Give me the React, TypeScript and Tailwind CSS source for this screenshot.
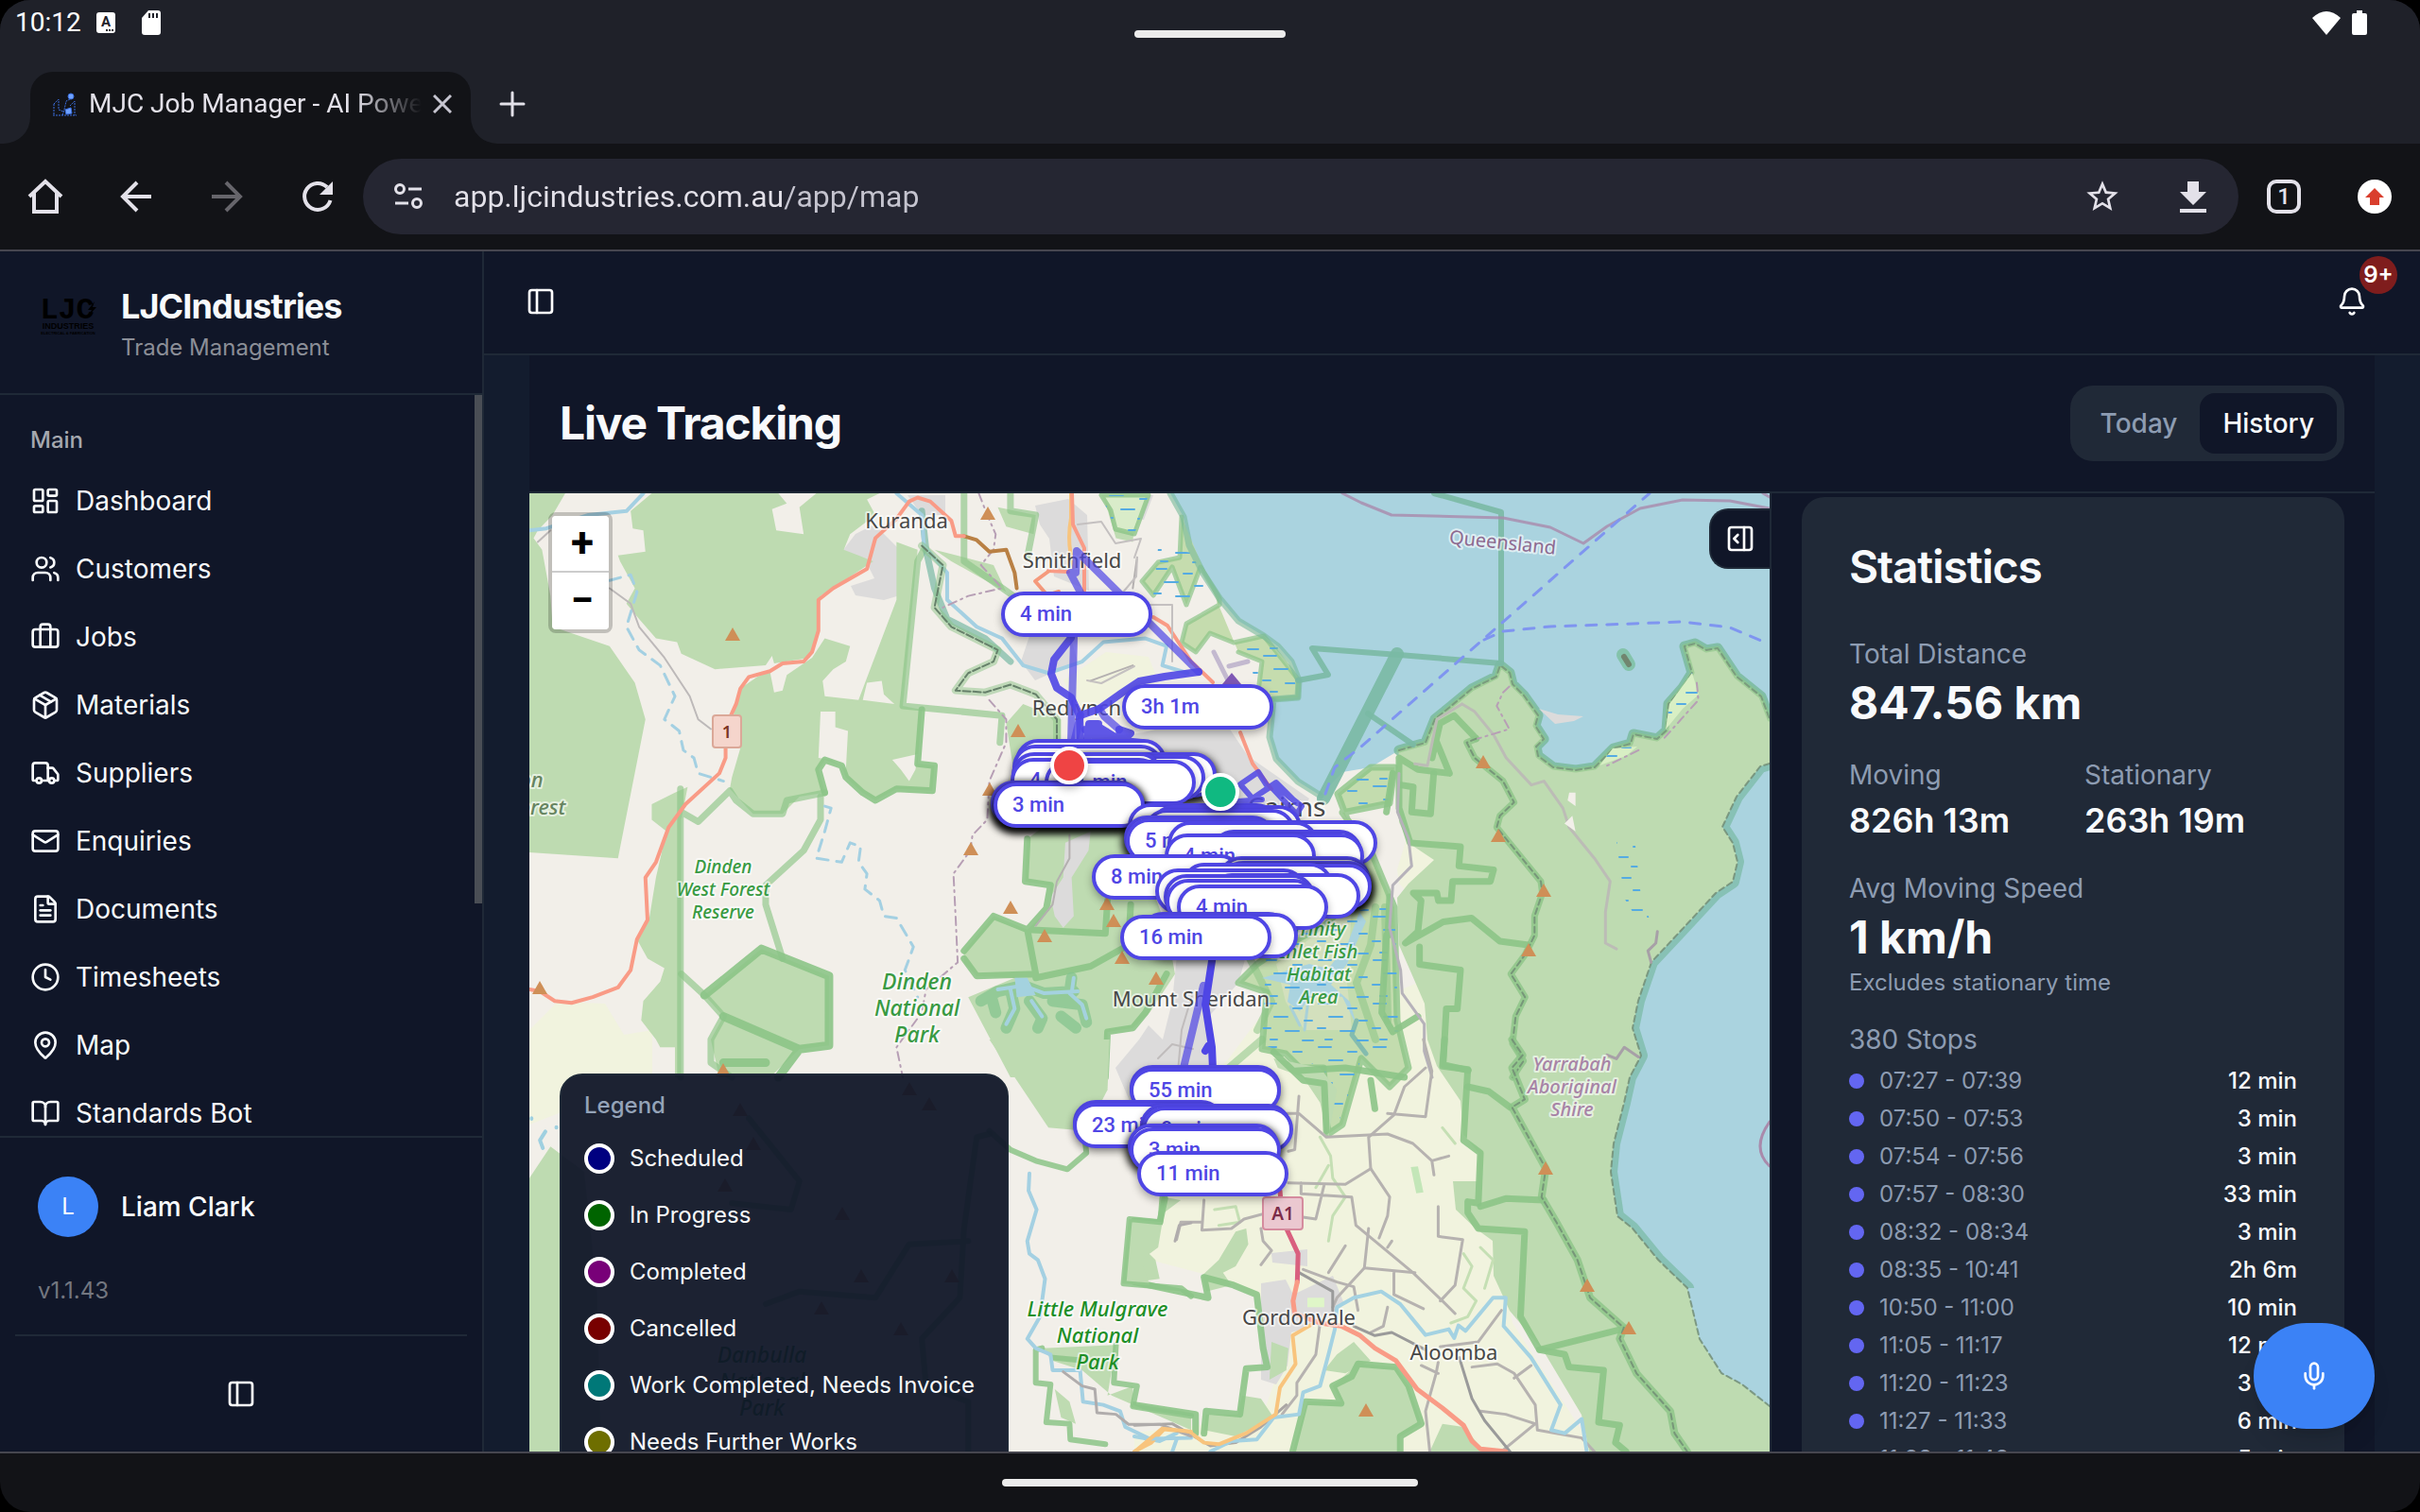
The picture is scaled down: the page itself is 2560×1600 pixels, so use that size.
import React, { useState } from "react";
import {
	Bell,
	BookOpen,
	Briefcase,
	Clock,
	FileText,
	LayoutDashboard,
	Mail,
	MapPin,
	Mic,
	Package,
	PanelLeft,
	PanelRightOpen,
	Truck,
	Users,
} from "lucide-react";

const navItems = [
	{ label: "Dashboard", icon: LayoutDashboard },
	{ label: "Customers", icon: Users },
	{ label: "Jobs", icon: Briefcase },
	{ label: "Materials", icon: Package },
	{ label: "Suppliers", icon: Truck },
	{ label: "Enquiries", icon: Mail },
	{ label: "Documents", icon: FileText },
	{ label: "Timesheets", icon: Clock },
	{ label: "Map", icon: MapPin },
	{ label: "Standards Bot", icon: BookOpen },
];

const legend = [
	{ label: "Scheduled", color: "bg-[#000080]" },
	{ label: "In Progress", color: "bg-[#006400]" },
	{ label: "Completed", color: "bg-[#780078]" },
	{ label: "Cancelled", color: "bg-[#780000]" },
	{ label: "Work Completed, Needs Invoice", color: "bg-[#007878]" },
	{ label: "Needs Further Works", color: "bg-[#6e6e00]" },
];

const stops = [
	["07:27 - 07:39", "12 min"],
	["07:50 - 07:53", "3 min"],
	["07:54 - 07:56", "3 min"],
	["07:57 - 08:30", "33 min"],
	["08:32 - 08:34", "3 min"],
	["08:35 - 10:41", "2h 6m"],
	["10:50 - 11:00", "10 min"],
	["11:05 - 11:17", "12 min"],
	["11:20 - 11:23", "3 min"],
	["11:27 - 11:33", "6 min"],
	["11:38 - 11:43", "5 min"],
];

// stop bubbles: x, y on the map canvas, label, heavy = many bubbles on one spot
const bubbles: [number, number, string, boolean?][] = [
	[499, 104, "4 min"],
	[627, 202, "3h 1m"],
	[514, 260, ""],
	[511, 266, ""],
	[567, 274, "", true],
	[555, 277, ""],
	[510, 274, ""],
	[509, 280, "4 min"],
	[545, 282, "11 min"],
	[488, 304, "", true],
	[491, 306, "3 min", true],
	[633, 328, ""],
	[657, 330, ""],
	[650, 334, ""],
	[629, 341, "", true],
	[737, 346, ""],
	[631, 344, "5 min"],
	[675, 347, ""],
	[721, 356, ""],
	[723, 360, ""],
	[672, 360, "4 min"],
	[595, 382, "8 min"],
	[729, 384, ""],
	[731, 389, "", true],
	[731, 392, "", true],
	[690, 391, ""],
	[662, 397, ""],
	[719, 402, ""],
	[671, 403, ""],
	[673, 408, ""],
	[685, 414, "4 min"],
	[646, 443, ""],
	[653, 444, ""],
	[625, 446, "16 min"],
	[635, 605, ""],
	[635, 608, "55 min"],
	[575, 642, ""],
	[575, 645, "23 min"],
	[646, 646, ""],
	[648, 649, "9 min"],
	[633, 667, "", true],
	[635, 671, "3 min"],
	[643, 696, "11 min"],
];

// mountain peaks on the 2x canvas
const peaks = [
	[775, 671], [1045, 543], [1077, 773], [1047, 835], [1027, 898], [1069, 960], [1105, 990],
	[1171, 956], [1178, 974], [1187, 1013], [1223, 1035], [765, 1132], [571, 1045],
	[1569, 806], [1585, 884], [1633, 942], [1617, 1005], [1635, 1236], [1679, 1360], [1723, 1405],
	[1445, 1492], [962, 1152], [983, 1168], [783, 1174], [797, 1210], [767, 1254], [891, 1284],
	[911, 1350], [1007, 1350], [869, 1384], [953, 1406],
];

const coast =
	"M1480,794 L1508,786 L1518,761 L1534,748 L1557,729 L1583,716 L1587,704 L1597,712 L1600,724 L1612,736 L1627,757 L1624,768 L1633,782 L1625,790 L1627,800 L1643,812 L1667,815 L1687,812 L1707,792 L1725,787 L1728,777 L1753,782 L1763,773 L1765,745 L1780,728 L1790,712 L1782,684 L1793,681 L1805,688 L1817,686 L1837,716 L1863,737 L1872,761";
const eastCoast =
	"M1872,808 L1862,811 L1837,843 L1822,875 L1833,892 L1838,912 L1833,933 L1815,945 L1777,986 L1747,1018 L1733,1059 L1727,1088 L1736,1117 L1724,1140 L1718,1167 L1707,1210 L1704,1240 L1711,1287 L1727,1300 L1754,1333 L1785,1363 L1798,1417 L1821,1453 L1843,1465 L1872,1488";
const westCoast =
	"M1238,522 L1252,547 L1258,577 L1273,607 L1290,633 L1310,657 L1337,673 L1352,684 L1366,700 L1374,720 L1373,738 L1347,740 L1343,780 L1350,803 L1373,827 L1397,842";

type LabelProps = {
	x: number;
	y: number;
	lines: string[];
	size?: number;
	color?: string;
	gap?: number;
	italic?: boolean;
};

function PlaceName({ x, y, lines, size = 22, color = "#474747", gap = 28, italic }: LabelProps) {
	return (
		<g
			fontFamily="'Noto Sans', sans-serif"
			fontSize={size}
			fontStyle={italic ? "italic" : "normal"}
			fontWeight={italic ? 500 : 400}
			textAnchor="middle"
			fill={color}
			stroke="#ffffff"
			strokeOpacity="0.6"
			strokeWidth="4"
			strokeLinejoin="round"
			paintOrder="stroke"
		>
			{lines.map((line, i) => (
				<text key={line} x={x} y={y + i * gap}>{line}</text>
			))}
		</g>
	);
}

function MapTiles() {
	const park = "#8cc487";
	return (
		<svg
			className="absolute inset-0 h-full w-full [&_path]:[vector-effect:non-scaling-stroke]"
			viewBox="560 522 1312 1014"
			preserveAspectRatio="xMinYMin slice"
			fill="none"
			strokeLinejoin="round"
			strokeLinecap="round"
			aria-label="Map"
		>
			<defs>
				<pattern id="marsh" width="58" height="46" patternUnits="userSpaceOnUse">
					<path d="M3,4 h13 M34,9 h9 M14,18 h14 M46,22 h8 M2,30 h8 M26,33 h14 M10,42 h7 M44,43 h11" stroke="#55abe2" strokeWidth="2" />
				</pattern>
			</defs>
			<rect x="560" y="522" width="1312" height="1014" fill="#f2efe9" />

			{/* farmland */}
			<path
				fill="#f1f3de"
				d="M1225,1200 L1300,1120 L1345,1060 L1400,1080 L1500,1040 L1490,900 L1520,905 L1560,1190 L1600,1400 L1690,1540 L1200,1540 L1200,1516 L1335,1500 L1370,1400 L1300,1355 L1204,1330 L1226,1296 Z"
			/>
			<path fill="#f1f3de" d="M560,1090 L590,1060 L640,1062 L660,1095 L690,1090 L690,1140 L560,1190 Z" />
			<path fill="#f1f3de" d="M1125,720 L1170,690 L1215,695 L1225,720 L1180,745 L1140,750 Z" />
			<path fill="#f1f3de" d="M1478,920 L1490,880 L1517,910 L1490,945 L1480,935 Z" />

			{/* towns */}
			<g fill="#dcdbdb">
				<path d="M905,565 L925,555 L960,590 L952,630 L935,635 L905,630 L900,620 L925,612 L915,592 L892,582 Z" />
				<path d="M960,524 L1000,524 L1000,545 L975,545 Z" />
				<path d="M1095,535 L1130,528 L1150,545 L1152,625 L1115,610 L1110,570 L1100,555 Z" />
				<path d="M1185,524 L1220,524 L1210,550 L1185,545 Z" />
				<path d="M1090,670 L1130,665 L1140,700 L1095,720 L1080,700 Z" />
				<path d="M1210,775 L1290,755 L1320,800 L1385,845 L1370,870 L1200,860 L1130,830 L1130,785 Z" />
				<path d="M1245,1010 L1320,1005 L1310,1040 L1275,1080 L1280,1130 L1195,1165 L1180,1130 L1205,1100 L1215,1085 L1230,1100 L1240,1060 Z" />
				<path d="M1334,1358 L1360,1354 L1368,1370 L1410,1350 L1422,1380 L1400,1400 L1366,1410 L1362,1445 L1350,1465 L1334,1460 Z" />
				<path d="M1345,1326 L1383,1322 L1383,1340 L1346,1336 Z" />
			</g>

			{/* sea */}
			<path fill="#aad3df" d={`${westCoast} L1420,817 L1450,812 L${coast.slice(1)} L1872,522 Z`} />
			<path fill="#aad3df" d={`${eastCoast} Z`} />

			{/* forest around the peninsula */}
			<path d={coast} stroke="#77b999" strokeWidth="11" strokeOpacity="0.8" />
			<path d={eastCoast} stroke="#77b9a3" strokeWidth="14" strokeOpacity="0.7" />
			<path
				fill="#bedbb1"
				d={`${coast} L${eastCoast.slice(1)} L1872,1540 L1682,1540 L1673,1497 L1633,1430 L1597,1387 L1580,1350 L1579,1313 L1561,1300 L1540,1280 L1537,1250 L1563,1250 L1564,1220 L1548,1200 L1545,1165 L1520,1128 L1510,1100 L1507,1062 L1480,1000 L1478,950 L1490,935 L1517,910 L1490,892 L1480,870 L1478,810 Z`}
			/>
			<path fill="#aad3df" d="M1872,1488 L1843,1465 L1821,1453 L1798,1417 L1785,1363 L1872,1363 Z" />
			<path d={coast} stroke="#8cc487" strokeWidth="5" strokeOpacity="0.6" />
			<path d={coast} stroke="#6f8a73" strokeWidth="2" strokeOpacity="0.7" strokeDasharray="6 4" />
			<path d={eastCoast} stroke="#6f8a73" strokeWidth="2" strokeOpacity="0.8" strokeDasharray="6 4" />
			<path d="M1717,693 l6,10" stroke="#7abf9d" strokeWidth="14" strokeOpacity="0.8" />
			<path d="M1718,695 l5,8" stroke="#71866f" strokeWidth="6" />
			<path fill="#d8efc4" d="M1790,712 L1797,735 L1780,750 L1762,772 L1766,745 Z M1706,792 L1732,790 L1720,800 L1692,810 Z" />
			<path fill="url(#marsh)" d="M1790,712 L1797,735 L1780,750 L1762,772 L1766,745 Z M1706,792 L1732,790 L1720,800 L1692,810 Z" />
			<path fill="url(#marsh)" d="M1710,890 L1730,895 L1736,950 L1750,985 L1735,978 L1718,950 Z" />
			<path fill="#dcdbdb" d="M1628,750 L1648,756 L1675,758 L1665,763 L1645,766 Z" />

			{/* western forests */}
			<g transform="translate(560 500) scale(0.4464 0.4082)">
				<g fill="#bedbb1">
					<path d="M0,54 L85,54 L55,110 L20,150 L10,170 L30,200 L50,320 L55,400 L190,450 L250,545 L275,640 L210,1000 L0,985 Z" />
					<path d="M290,54 L590,54 L610,80 L575,95 L585,150 L650,160 L640,90 L680,54 L830,54 L800,70 L820,110 L760,160 L745,200 L780,215 L815,230 L760,270 L690,320 L682,420 L665,480 L580,495 L575,475 L560,500 L440,510 L360,470 L350,440 L300,430 L260,380 L230,340 L250,300 L215,230 L210,215 L275,205 L270,150 L245,145 L240,100 Z" />
					<path d="M870,180 L920,200 L885,605 L930,615 L920,755 L960,760 L955,825 L870,820 L820,850 L790,830 L750,790 L740,760 L700,745 L685,770 L700,830 L640,840 L600,885 L530,885 L475,820 L480,790 L500,715 L470,690 L490,600 L500,560 L540,530 L570,515 L580,570 L600,565 L610,525 L670,480 L700,430 L760,450 L750,490 L720,510 L695,540 L700,580 L780,590 L870,330 Z" />
					<path d="M375,815 L345,830 L290,860 L290,900 L325,930 L300,1050 L285,1150 L255,1210 L280,1260 L320,1285 L310,1320 L270,1370 L265,1420 L300,1470 L310,1490 L345,1490 L345,1568 L360,1568 L360,900 Z" />
					<path d="M415,1355 L550,1235 L710,1305 L710,1485 L640,1495 L570,1568 L450,1568 L430,1470 L460,1410 Z" />
					<path d="M1030,1240 L1100,1150 L1180,1185 L1235,1130 L1235,1070 L1175,1060 L1180,950 L1240,900 L1400,900 L1450,1000 L1510,1180 L1530,1300 L1470,1400 L1430,1440 L1370,1450 L1370,1568 L1140,1568 L1040,1360 L1150,1310 L1060,1305 L1030,1270 Z" />
					<path d="M1110,90 L1200,110 L1195,160 L1130,140 Z M1170,600 L1260,640 L1260,700 L1150,790 L1130,650 Z M1360,60 L1440,60 L1430,180 L1390,170 Z" />
					<path d="M960,200 L1100,240 L1130,310 L1000,230 Z" />
				</g>
				{/* suburb strip in the valley */}
				<path d="M1270,960 L1330,930 L1325,980 L1285,1050 L1290,1150 L1265,1180 L1245,1150 L1235,1100 L1265,1050 Z" fill="#dcdbdb" />
				<g fill="#f2efe9">
					<path d="M690,620 L725,620 L725,660 L755,670 L750,770 L715,745 L685,740 Z" />
					<path d="M860,745 L920,730 L915,770 L900,800 L880,770 Z" />
					<path d="M800,545 L835,540 L840,575 L865,600 L790,590 Z" />
				</g>
				{/* park borders */}
				<g stroke={park} strokeWidth="7" strokeOpacity="0.65">
					<path d="M935,200 L920,230 L885,605 L1120,630 L1115,700" />
					<path d="M930,615 L920,755 L960,760 L955,825 L870,820 L820,850 L790,830 L750,790 L740,760 L700,745 L685,770 L700,830" strokeOpacity="0.9" />
					<path d="M1030,54 L1030,230 L1160,330 M1140,54 L1140,100 L1200,110 L1180,220" />
					<path d="M358,820 L358,1568 M360,880 L400,905 L475,825 L490,850 L530,885 L600,885 L610,850 L700,830" />
					<path d="M690,840 L690,900 L650,980 L560,1070 L560,1120 L600,1260" />
					<path d="M360,1300 L415,1355 L460,1410 L430,1470 L430,1530 L480,1568" />
					<path d="M415,1355 L550,1235 L710,1305 L710,1485 L640,1495 L460,1410 M640,1495 L590,1568 M460,1530 L560,1530" strokeWidth="9" strokeOpacity="0.9" />
					<path d="M1030,1240 L1100,1150 L1180,1185 L1365,1195 L1370,1110 M1180,1185 L1200,1300 L1060,1305 L1030,1260 M1180,950 L1175,1060 L1235,1070 L1225,1130 L1180,1185 M1200,1310 L1330,1280 L1420,1225 L1425,1120" strokeOpacity="0.9" />
					<path d="M1510,1300 L1460,1400 L1430,1440 L1370,1450 L1365,1568" strokeOpacity="0.9" />
					<path d="M930,100 L940,200 L960,300 L990,380 L1080,430 L1140,490" stroke="#6fb3a0" />
				</g>
				{/* reservoir */}
				<path
					d="M1070,1370 L1110,1345 L1170,1330 L1220,1350 L1290,1345 M1140,1340 L1150,1390 L1130,1440 M1185,1370 L1215,1415 L1205,1440 M1240,1370 L1310,1380 L1320,1425 M1095,1360 L1105,1400 M1280,1350 L1285,1310 M1260,1410 L1295,1440"
					stroke="#84c48f"
					strokeWidth="12"
					strokeOpacity="0.75"
				/>
				<path
					d="M1110,1340 L1170,1330 L1220,1350 L1300,1345 M1140,1340 L1150,1390 L1130,1430 M1190,1370 L1215,1410 M1280,1350 L1310,1380 L1320,1415 M1285,1350 L1290,1310"
					stroke="#a4d2df"
					strokeWidth="4"
				/>
				<path d="M1150,1310 L1180,1310 L1200,1355 L1155,1360 Z" fill="#a4d2df" />
				{/* creeks */}
				<g stroke="#a4d0e2" strokeWidth="4">
					<path d="M0,150 L40,145 L140,110 L230,100 L270,54" />
					<path d="M190,280 L240,265 L255,310 L230,400 L260,460 L310,500 L345,580 L320,640 L355,670 L365,720 L390,740 L400,780 L460,800" strokeWidth="3" strokeDasharray="12 9" />
					<path d="M700,865 L715,870 L700,930 L680,1000 L740,1010 L760,960 L785,970 L780,1010 L800,1040 L795,1080 L830,1110 L840,1150 L870,1155 L910,1230 L890,1290 L920,1360" strokeWidth="3" strokeDasharray="12 9" />
					<path d="M870,54 L930,110 L935,190 L990,260 L990,330 L1060,400 L1120,430 L1170,500 L1230,520 L1310,490 L1360,440 L1460,430 L1510,450 L1500,500 L1560,520" />
				</g>
				{/* boundary lines */}
				<g stroke="#b79fb5" strokeWidth="2" strokeDasharray="9 5 2 5">
					<path d="M1065,54 L1085,110 L1105,160 L1100,200 L1070,240 L1120,300 L1040,320 L980,350" />
					<path d="M1090,590 L1130,640 L1130,700 L1090,800 L1085,900 L1050,940 L1045,980 L1005,1040 L1010,1150 L1015,1270 L940,1340 L930,1400 L870,1490 L885,1568" />
				</g>
				<path d="M930,190 L980,240 L960,350 L1000,400 L1110,460 L1100,490 L1040,520 L1010,565 L1080,570 L1140,550 L1200,575 L1250,640 L1250,700" stroke={park} strokeWidth="8" strokeOpacity="0.5" />
				<path d="M930,190 L980,240 L960,350 L1000,400 L1110,460 L1100,490 L1040,520 L1010,565 L1080,570 L1140,550 L1200,575 L1250,640 L1250,700" stroke="#66806a" strokeWidth="2" strokeDasharray="8 3" />
				<path d="M190,300 L240,340 L260,400 L320,480 L380,580 L400,640 L430,665 M20,180 L50,150" stroke="#bdb9b9" strokeWidth="2" />
				<path d="M1200,1175 L1240,1120 L1250,1060 L1280,1000 L1280,940 M1440,220 L1430,300 M1330,540 L1430,500" stroke="#b4b0b0" strokeWidth="2" />
				{/* highways */}
				<path d="M1030,165 L1060,175 L1090,205 L1130,200 L1150,260 L1155,300" stroke="#b98044" strokeWidth="4" />
				<path
					d="M0,1340 L25,1345 L60,1370 L100,1375 L150,1360 L210,1335 L240,1290 L255,1210 L280,1160 L275,1050 L300,1010 L330,920 L370,860 L450,780 L465,740 L465,660 L490,600 L500,560 L520,530 L570,515 L600,495 L650,490 L670,465 L685,410 L685,330 L720,300 L800,250 L820,170 L870,120 L900,75 L920,65 L950,75 L1000,125 L1010,165 L1030,165"
					stroke="#f99b86"
					strokeWidth="4"
				/>
			</g>

			{/* coast strip and inlet */}
			<path
				d="M1250,547 L1248,590 L1225,595 L1208,615 L1220,630 L1240,600 L1255,640 L1270,600 L1290,633 L1290,640 L1255,660 L1250,680 L1265,690 L1280,670 L1305,680 L1337,673 L1374,720 L1373,738 L1347,740 L1330,740 L1335,700 L1310,690"
				fill="#c5dcae"
				stroke={park}
				strokeWidth="5"
				strokeOpacity="0.7"
			/>
			<path d="M1165,524 L1215,524 L1200,565 L1180,560 L1175,540 Z" fill="#d9ecc9" stroke={park} strokeWidth="5" strokeOpacity="0.8" />
			<path d="M1165,524 L1215,524 L1200,565 L1180,560 Z M1225,580 L1262,585 L1280,640 L1220,630 Z M1310,680 L1360,685 L1374,738 L1330,740 L1325,710 Z" fill="url(#marsh)" />
			<path
				d="M1450,812 L1475,812 L1470,850 L1420,860 L1450,900 L1475,960 L1478,1080 L1490,1130 L1470,1150 L1440,1120 L1420,1190 L1405,1200 L1400,1130 L1375,1130 L1360,1115 L1335,1110 L1340,1050 L1310,1040 L1330,1020 L1360,1000 L1400,980 L1440,950 L1430,880 L1415,840 Z"
				fill="#c3dcae"
				stroke={park}
				strokeWidth="7"
				strokeOpacity="0.8"
			/>
			<path d="M1350,1020 L1430,960 L1425,1040 L1430,1090 L1380,1090 L1360,1060 Z" fill="#d3e0bd" />
			<path d="M1455,960 L1450,1000 L1435,1040 L1445,1070 L1455,1100 M1465,960 L1468,1080 M1335,1100 L1300,1130 L1285,1140 M1320,1010 L1345,1060 L1330,1090" stroke={park} strokeWidth="8" strokeOpacity="0.55" />
			<path d="M1438,965 L1425,1000 L1405,1025 L1385,1020 L1335,1035 L1365,1042 L1362,1060 L1375,1070 L1390,1050 L1420,1055 L1435,1085 L1428,1060 L1408,1042 L1425,1020 L1445,975 Z" fill="#aad3df" />
			<path d="M1435,1080 L1430,1095 L1445,1115" stroke="#84bcae" strokeWidth="5" />
			<path d="M1385,1050 L1380,1090 M1365,1065 L1375,1085" stroke="#a9d1d8" strokeWidth="3" />
			<path d="M1340,1000 L1475,950 L1480,1120 L1440,1120 L1415,1190 L1400,1130 L1335,1105 Z M1420,820 L1472,815 L1468,850 L1425,855 Z" fill="url(#marsh)" />
			<path d={westCoast} stroke="#77b999" strokeWidth="7" strokeOpacity="0.6" />
			<path d="M1284,690 L1300,722 M1300,705 L1320,700" stroke="#c3b9cf" strokeWidth="5" />
			<path d="M1293,724 L1303,712 L1313,724 Z" fill="#7e57b4" />

			{/* marine park limits */}
			<g stroke="#7ab9a4" strokeWidth="6" strokeOpacity="0.9">
				<path d="M1373,720 L1405,714 L1388,686 L1480,693 L1588,702 L1588,542 L1517,522" />
				<path d="M1447,755 L1495,788" />
				<path d="M1478,692 L1400,845" strokeWidth="14" />
			</g>
			<path d="M1420,522 L1440,532 L1472,545 L1590,548 L1640,558 L1675,575 L1700,557 L1735,538 L1780,529 L1830,530 L1872,538 M1865,522 L1872,526" stroke="#a98aab" strokeWidth="3" strokeOpacity="0.8" />
			<path d="M1872,1187 Q1852,1215 1872,1234" stroke="#a98aab" strokeWidth="3" />
			<g stroke="#7f95f0" strokeWidth="3" strokeDasharray="11 11">
				<path d="M1402,840 L1412,812 L1440,790 L1565,680 L1745,522" />
				<path d="M1570,677 L1590,668 L1640,663 L1700,661 L1780,658 L1830,664 L1868,680" />
			</g>

			{/* eastern ridge and tracks */}
			<g transform="translate(1400 500) scale(0.3333 0.4082)">
				<g stroke={park} strokeWidth="7" strokeOpacity="0.9">
					<path d="M345,740 L370,650 L415,630 L485,690 M355,690 L400,780 L300,770 L240,740 M240,740 L240,870 L275,960 L435,970 L430,1020 L540,1030 L530,1060 L410,1060 L405,1110 L365,1110 L360,1090 L285,1090 L310,1110 L300,1190 L260,1220 L380,1165 L470,1155 L560,1215 L650,1225" />
					<path d="M245,810 L285,815 L280,880 L340,885 L350,780 M305,1230 L305,1275 L435,1290 L425,1390 L390,1390 L380,1535 L460,1550" />
					<path d="M200,1200 L185,1400 L220,1450 L300,1410 M200,880 L220,780 M210,1100 L205,1200" />
				</g>
				<path d="M485,690 L455,700 L480,740 L570,800 L605,855 L560,890 L550,920 L600,970 L690,1060 L695,1090 L670,1150 L670,1200 L640,1250 L595,1300 L640,1360 L610,1410 L600,1480 L635,1525 L600,1568" stroke="#8cc487" strokeWidth="7" strokeOpacity="0.8" />
				<path d="M485,690 L455,700 L480,740 L570,800 L605,855 L560,890 L550,920 L600,970 L690,1060 L695,1090 L670,1150 L670,1200 L640,1250 L595,1300 L640,1360 L610,1410 L600,1480 L635,1525 L600,1568" stroke="#6f8a73" strokeWidth="2" strokeOpacity="0.8" strokeDasharray="6 4" />
				<path d="M440,600 L480,620 L540,680 L580,740 L660,810 L700,800 L760,870 L780,920 L860,1000 L910,1060 L895,1140 L895,1220 L930,1235 M440,600 L360,640 L330,760 L290,755" stroke="#bcbcb6" strokeWidth="3" />
				<path d="M240,780 L235,880 L270,950 L280,1020 L220,1070 L210,1180 L245,1290 L250,1350 L320,1430 L320,1500 L345,1568" stroke="#b6b2ba" strokeWidth="3" />
				<path d="M590,555 L570,570 L550,605 L590,665 L490,690 M1185,545 L1190,590 L1080,690 M1000,720 L900,760" stroke="#b79fb5" strokeWidth="2" strokeDasharray="9 5 2 5" />
				<path d="M900,1510 L930,1520 L955,1490 L1000,1515 M1060,1190 L1055,1220 L1030,1240 L1040,1270" stroke="#a7a0a7" strokeWidth="3" />
				<path d="M780,830 L800,830 L800,865 L775,850 Z M765,910 L790,890 L800,930 Z" fill="#f2efe9" />
			</g>

			{/* southern valley */}
			<g transform="translate(1200 1100) scale(0.4464 0.3333)">
				<path d="M0,770 L100,790 L170,810 L165,750 L240,790 L290,820 L305,960 L250,1040 L245,1190 L0,1160 Z" fill="#f2efe9" />
				<g fill="#bedbb1">
					<path d="M0,575 L60,580 L70,500 L110,510 L60,560 L20,660 L50,700 L60,760 L0,770 Z" />
					<path d="M265,600 L270,650 L240,720 L210,740 L230,780 L170,800 L160,750 L200,700 L240,610 Z" />
					<path d="M375,1308 L410,1150 L490,1150 L470,1100 L530,1030 L620,1040 L650,1100 L680,1220 L630,1260 L630,1308 Z M480,1000 L520,960 L560,1020 L500,1060 L450,1050 Z" />
					<path d="M170,1190 L245,1190 L255,1130 L300,1140 L330,1200 L240,1260 L165,1240 Z M325,960 L365,980 L360,1050 L320,1080 Z M730,1220 L780,1230 L830,1308 L700,1308 Z" />
					<path d="M330,60 L440,90 L480,160 L460,310 L440,200 L400,120 L340,90 Z" />
				</g>
				<g stroke={park} strokeWidth="7" strokeOpacity="0.9">
					<path d="M0,575 L60,582 L72,505" />
					<path d="M0,770 L175,820 L165,755 L235,780 L290,810 L305,980 L315,1040 L265,1045 L250,1190 L170,1180 L165,1250 M0,1160 L145,1190 L145,1250" />
					<path d="M735,0 L730,85 L790,95 L780,320 L820,360 L815,520 L790,515 L790,550 L815,600 L925,610 L915,880 L960,985 L1020,1000 L1030,1040 L1112,1050 L1100,1215 L1150,1225 L1140,1280 L1165,1308" />
					<path d="M790,150 L840,165 L890,215 M820,530 L880,505 L970,510 M960,985 L1170,915" />
					<path d="M375,1308 L405,1150 L490,1155 L470,1100 L515,1070 L530,1030 L620,1040 L650,1100 L680,1220 L630,1260 L630,1308" />
					<path d="M330,40 L400,130 L450,140 L455,290 M560,130 L570,220 M380,100 L500,90 L640,120" />
				</g>
				<g stroke="#c5dfb4" strokeWidth="3">
					<path d="M440,310 L465,370 L470,440 L500,500 L470,560 L460,640 M460,400 L430,470 M190,540 L240,530 L250,580 L200,590" />
					<path d="M780,680 L800,720 L780,790 L810,830 L790,880 L750,900 M820,660 L850,700 L830,790 M730,280 L760,330" />
				</g>
				<path d="M655,405 L672,403 L685,485 L668,488 Z" fill="#c3e6b8" />
				<path d="M410,820 h40 v30 h-40 Z" fill="#dff6c8" />
				{/* local roads */}
				<g stroke="#b6b2b0" strokeWidth="3">
					<path d="M360,235 L390,235 L455,310 L600,300 L660,330 L705,385 L745,370 M705,385 L710,430 M390,180 L380,350 L365,355" />
					<path d="M600,235 L690,245 L705,100 L685,0 M690,90 L640,150 L615,240 L555,310 L560,410 L605,500 L600,560 L580,630" />
					<path d="M365,455 L500,460 L560,410 M395,455 L395,490 L515,500 L525,590 L660,740 L730,830 L760,870 M450,460 L430,570 L380,560" />
					<path d="M720,530 L720,625 L778,635 L760,780 L725,830 M610,640 L600,660 M555,600 L545,725 L665,740 M615,740 L615,810 L685,855" />
					<path d="M545,725 L480,820 L470,850 M500,655 L460,740 M400,730 L480,770 L520,785 L530,860" />
					<path d="M165,510 L160,605 M160,580 L110,580 L100,635 M160,605 L230,600 L260,570 L330,545 M300,600 L305,640 L325,670 L300,715" />
					<path d="M440,900 L430,1000 L385,1090 L385,1130 L350,1190 M870,860 L815,960 L725,975 M600,850 L590,910 L560,930" />
					<path d="M720,1025 L715,1060 L690,1180 L700,1308 M680,1035 L720,1060 M800,1040 L860,1030 L900,1060 L950,1160 L955,1240 L1060,1265 L1090,1308 M940,1035 L900,1075 M820,1180 L880,1190 L950,1220 L870,1308" />
				</g>
				<path d="M390,740 L470,800 L470,860 M520,910 L570,940 L610,930 L690,985 M770,1010 L800,1140 L830,1210 L890,1308" stroke="#9a9a9a" strokeWidth="3" />
				<path d="M0,1225 L90,1220 L180,1290 L240,1280 L300,1230 L360,1160" stroke="#aaa6a4" strokeWidth="3" />
				{/* Mulgrave River */}
				<path
					d="M180,1308 L230,1275 L290,1270 L330,1200 L390,1190 L400,1120 L440,1100 L460,1000 L475,920 L480,850 L520,820 L585,800 L630,840 L690,938 L745,920 L758,948 L768,908 L785,925 L850,820 L880,820 L875,910 L940,1010 L1010,1160 L988,1240 L1020,1250 L1060,1205 L1072,1308"
					stroke="#a4d2e2"
					strokeWidth="4"
				/>
				<path d="M0,1260 L60,1275 L100,1250 M90,1308 L100,1270" stroke="#a4d2e2" strokeWidth="4" />
				<path d="M420,905 L375,940 L382,1030 L345,1105 L335,1190 L265,1250 L200,1285 L165,1280 L130,1245 L70,1238 L40,1280 L0,1308" stroke="#f8c47d" strokeWidth="4" />
				<path d="M345,480 L347,510 M362,605 L388,680 L386,770" stroke="#d9607f" strokeWidth="5" />
				<path d="M386,770 L376,830 L380,870 L440,900 L490,910 L535,940 L570,980 L620,1020 L670,1110 L730,1170 L780,1225 L800,1275 L820,1300 L880,1308" stroke="#f99b86" strokeWidth="5" />
				<path d="M895,0 L920,50 L895,90 L925,190 L895,215 L975,410 L965,500 L1000,580 L1050,700 L1080,820 L1160,915 L1150,950 L1190,1060 L1270,1180 L1280,1250 L1310,1308" stroke="#8cc487" strokeWidth="8" strokeOpacity="0.8" />
				<path d="M895,0 L920,50 L895,90 L925,190 L895,215 L975,410 L965,500 L1000,580 L1050,700 L1080,820 L1160,915 L1150,950 L1190,1060 L1270,1180 L1280,1250 L1310,1308" stroke="#6f8a73" strokeWidth="2" strokeOpacity="0.8" strokeDasharray="6 4" />
			</g>

			{/* south-west corner, partly under the legend */}
			<g transform="translate(560 1100) scale(0.4464 0.3333)">
				<path d="M0,440 L50,340 L130,420 L160,800 L170,1308 L0,1308 Z" fill="#bedbb1" />
				<path d="M1090,0 L1230,280 L1320,290 L1370,160 L1375,0 Z" fill="#bedbb1" />
				<path d="M1420,570 L1500,580 L1490,660 L1450,700 L1470,780 L1405,775 Z M1245,1110 L1280,1150 L1295,1220 L1260,1200 Z M1215,980 L1390,970 L1370,1130 L1430,1100 L1430,1170 L1568,1200 L1568,1240 L1380,1130 L1310,1050 L1240,1020 Z" fill="#bedbb1" />
				<g stroke={park} strokeWidth="6" strokeOpacity="0.85">
					<path d="M1090,290 L1140,350 L1200,385 L1275,412 L1320,360 L1315,300" />
					<path d="M1500,500 L1495,580 L1422,570 L1408,775 L1545,790 L1568,815 M1215,980 L1200,985 L1200,1090 L1235,1095 L1225,1215 L1280,1220 L1282,1270 L1365,1285 M1390,970 L1385,1090 L1440,1100 L1430,1165 L1568,1195 M1240,1010 L1320,1020" />
					<path d="M1090,300 L1060,310 L1030,600 L1020,820 L930,950 L940,1100 L1040,1150 L1040,1308 M520,250 L640,450 L620,540 L480,520 M560,840 L640,800 L820,820 L900,650 L1040,640" />
				</g>
				<path d="M1185,425 L1183,480 L1202,540 L1180,640 L1185,680 L1205,700 L1222,760 L1210,880 L1180,950 L1200,980 L1235,1000 L1240,1050 L1305,1050 L1312,1150 L1360,1160 L1400,1180 L1412,1230 L1470,1268 L1568,1265" stroke="#a4d0e2" strokeWidth="4" />
				<path d="M38,292 L25,320 L32,345 M5,250 v2 M64,278 v2" stroke="#9fd0e0" strokeWidth="4" />
				<path d="M1265,1055 L1310,1100 L1340,1110 L1345,1185 L1390,1190 L1420,1222 L1495,1222 L1568,1260 M1530,640 L1540,590 L1568,582" stroke="#b0acac" strokeWidth="3" />
				<path d="M1435,1308 L1500,1235 L1568,1245" stroke="#f8c47d" strokeWidth="4" />
			</g>

			{/* roads north of the city */}
			<path d="M1133,522 L1133,548 Q1128,575 1136,600" stroke="#f8c47d" strokeWidth="4" />
			<path d="M1134,522 L1135,555 L1147,580 L1147,626 M1109,604 L1130,605 M1220,653 L1235,662 L1260,700 L1283,722 M1312,775 L1325,808 L1345,835" stroke="#f99b86" strokeWidth="4" />
			<path d="M1110,604 L1095,615 L1108,630 L1120,626" stroke="#f59a7c" strokeWidth="4" />
			<path d="M1140,555 L1165,552 L1180,575 L1207,570 L1200,590 M1203,590 L1202,610 L1160,660 M1205,640 L1240,640 L1240,700 M1150,720 L1165,723 L1200,705" stroke="#c4c0c0" strokeWidth="2" />
			<path d="M1245,1145 L1250,1090 L1262,1050 M1225,1120 L1240,1105 L1262,1110" stroke="#c0bcbc" strokeWidth="2" />

			<g fill="#cf8f57">
				{peaks.map(([x, y]) => (
					<path key={`${x}-${y}`} d={`M${x},${y - 7} l8,14 h-16 Z`} />
				))}
			</g>

			{/* place names */}
			<PlaceName x={959} y={559} lines={["Kuranda"]} />
			<PlaceName x={1134} y={601} lines={["Smithfield"]} />
			<PlaceName x={1139} y={757} lines={["Redlynch"]} />
			<PlaceName x={1361} y={864} lines={["Cairns"]} size={28} />
			<PlaceName x={1260} y={1065} lines={["Mount Sheridan"]} />
			<PlaceName x={1374} y={1402} lines={["Gordonvale"]} />
			<PlaceName x={1538} y={1439} lines={["Aloomba"]} />
			<PlaceName x={562} y={833} lines={["on"]} color="#66845f" italic />
			<PlaceName x={568} y={862} lines={["Forest"]} color="#66845f" italic />
			<PlaceName x={765} y={924} lines={["Dinden", "West Forest", "Reserve"]} size={19} gap={24} color="#389a42" italic />
			<PlaceName x={970} y={1047} lines={["Dinden", "National", "Park"]} size={23} color="#389a42" italic />
			<PlaceName x={1161} y={1393} lines={["Little Mulgrave", "National", "Park"]} color="#1d8f26" italic />
			<PlaceName x={806} y={1442} lines={["Danbulla", "National", "Park"]} size={23} color="#1d8f26" italic />
			<PlaceName x={1395} y={990} lines={["Trinity", "Inlet Fish", "Habitat", "Area"]} size={20} gap={24} color="#389a42" italic />
			<PlaceName x={1663} y={1133} lines={["Yarrabah", "Aboriginal", "Shire"]} size={20} gap={24} color="#a783a6" italic />
			<g transform="rotate(6 1590 570)">
				<PlaceName x={1590} y={581} lines={["Queensland"]} size={20} color="#8d6a90" />
			</g>

			{/* road shields */}
			<g fontFamily="'Noto Sans', sans-serif" fontWeight="600" textAnchor="middle">
				<rect x="754" y="757" width="30" height="34" rx="3" fill="#f5d5cc" stroke="#dba898" strokeWidth="2" />
				<text x="769" y="781" fontSize="18" fill="#7c3524">1</text>
				<rect x="1336" y="1267" width="42" height="34" rx="3" fill="#ebc8d0" stroke="#d58c9e" strokeWidth="2" />
				<text x="1357" y="1291" fontSize="19" fill="#7b2c49">A1</text>
			</g>

			{/* tracked route */}
			<g stroke="#4f46e5" strokeWidth="8" strokeOpacity="0.7">
				<path d="M1143,627 L1132,606 L1138,606 L1139,583 L1268,711" />
				<path d="M1268,711 L1232,716 L1205,721 L1187,733 L1163,750 L1143,757" strokeOpacity="0.9" />
				<path d="M1133,675 L1115,698 L1112,713 L1118,728 L1133,738 L1142,757 L1143,786" strokeOpacity="0.9" />
				<path d="M1136,675 L1133,785" />
				<path d="M1163,750 L1168,758 L1184,772 M1143,757 L1136,786" />
				<path d="M1150,782 L1152,766 L1162,766 L1158,780 L1172,784 L1160,768 L1186,784 L1184,772 L1196,776 L1188,784 L1208,786 M1148,772 L1170,774" strokeOpacity="0.9" />
				<path d="M1312,830 L1331,817 L1342,834 L1325,845 L1312,830 M1325,845 L1350,828 L1372,850 L1350,832 M1345,833 L1372,862 M1368,846 L1377,853 L1370,864 M1310,848 L1335,846" strokeOpacity="0.85" strokeWidth="6" />
				<path d="M1282,1017 L1275,1063 L1282,1108 L1283,1132 M1278,1107 L1275,1112" strokeOpacity="1" />
				<path d="M1273,1043 L1252,1130" />
			</g>
		</svg>
	);
}

function MapPanel() {
	return (
		<section className="relative min-w-0 flex-1 overflow-hidden bg-[#f2efe9]">
			<MapTiles />

			{bubbles.map(([x, y, label, heavy], i) => (
				<div
					key={i}
					className={`absolute flex h-12 w-40 items-center rounded-full border-4 border-[#4f46e5] bg-white px-4 font-['Roboto',sans-serif] text-[22px] leading-none font-medium text-[#4f46e5] ${
						heavy ? "shadow-[0_4px_8px_2px_rgba(0,0,0,0.9)]" : "shadow-[0_4px_8px_rgba(0,0,0,0.3)]"
					}`}
					style={{ left: x, top: y }}
				>
					{label}
				</div>
			))}
			<div className="absolute top-[268px] left-[551px] size-10 rounded-full border-4 border-white bg-[#ef4444] shadow-[0_4px_8px_rgba(0,0,0,0.3)]" />
			<div className="absolute top-[296px] left-[711px] size-10 rounded-full border-4 border-white bg-[#10b981] shadow-[0_4px_8px_rgba(0,0,0,0.3)]" />

			<div className="absolute top-5 left-5 flex flex-col rounded-lg border-4 border-black/20 bg-clip-padding font-['Roboto',sans-serif] text-[44px] leading-none font-bold text-black">
				<button aria-label="Zoom in" className="h-[60px] w-[60px] rounded-t border-b-2 border-[#ccc] bg-white pb-0.5 pl-1">+</button>
				<button aria-label="Zoom out" className="h-[60px] w-[60px] rounded-b bg-white pb-0.5 pl-1">−</button>
			</div>

			<button aria-label="Open panel" className="absolute top-4 right-0 flex size-16 items-center justify-center rounded-l-[20px] border-2 border-r-0 border-[#1f2937] bg-[#101628] text-white">
				<PanelRightOpen size={32} />
			</button>

			<div className="absolute top-[614px] left-8 w-[475px] rounded-3xl border-2 border-[#1f2937] bg-[#101628]/95 px-6 pt-4 pb-8">
				<h3 className="text-2xl font-medium text-[#94a3b8]">Legend</h3>
				<ul className="mt-2.5">
					{legend.map((item) => (
						<li key={item.label} className="flex h-[60px] items-center gap-4 text-2xl text-[#f8fafc]">
							<span className={`size-8 rounded-full border-4 border-white ${item.color}`} />
							{item.label}
						</li>
					))}
				</ul>
			</div>
		</section>
	);
}

function StatsPanel() {
	return (
		<aside className="w-[640px] shrink-0 overflow-hidden border-l-2 border-[#1f2937] px-8 pt-1">
			<div className="rounded-3xl bg-[#202937] p-[50px]">
				<h2 className="text-5xl font-semibold tracking-tight text-[#f8fafc]">Statistics</h2>
				<div className="mt-12 flex flex-col gap-6">
					<div>
						<p className="text-[28px] leading-10 text-[#8d9cb2]">Total Distance</p>
						<p className="text-5xl leading-16 font-bold text-[#f8fafc]">847.56 km</p>
					</div>
					<div className="grid grid-cols-2 gap-6">
						<div>
							<p className="text-[28px] leading-10 text-[#8d9cb2]">Moving</p>
							<p className="text-4xl leading-14 font-semibold text-[#f8fafc]">826h 13m</p>
						</div>
						<div>
							<p className="text-[28px] leading-10 text-[#8d9cb2]">Stationary</p>
							<p className="text-4xl leading-14 font-semibold text-[#f8fafc]">263h 19m</p>
						</div>
					</div>
					<div>
						<p className="text-[28px] leading-10 text-[#8d9cb2]">Avg Moving Speed</p>
						<p className="text-5xl leading-16 font-bold text-[#f8fafc]">1 km/h</p>
						<p className="text-2xl text-[#8d9cb2]">Excludes stationary time</p>
					</div>
					<div>
						<p className="text-[28px] leading-10 text-[#8d9cb2]">380 Stops</p>
						<ul className="mt-2 flex flex-col gap-2">
							{stops.map(([time, length]) => (
								<li key={time} className="flex items-center gap-4 text-2xl">
									<span className="size-4 rounded-full bg-[#6366f1]" />
									<span className="flex-1 text-[#8d9cb2]">{time}</span>
									<span className="font-medium text-[#f8fafc]">{length}</span>
								</li>
							))}
						</ul>
					</div>
				</div>
			</div>
		</aside>
	);
}

function Sidebar() {
	return (
		<aside className="flex w-[512px] shrink-0 flex-col border-r-2 border-[#1f2937] bg-[#101628]">
			<div className="flex h-[152px] shrink-0 items-center gap-6 border-b-2 border-[#1f2937] px-10">
				<svg viewBox="0 0 64 64" className="size-16 overflow-visible" fill="#000000" fontWeight="bold" textAnchor="middle" aria-label="LJC Industries">
					<g fontSize="32" fontFamily="'Liberation Mono', monospace">
						<text x="12" y="28">L</text>
						<text x="31" y="28">J</text>
						<text x="50" y="28">C</text>
					</g>
					<g fontFamily="'Liberation Sans', sans-serif">
						<text x="32" y="39" fontSize="9">INDUSTRIES</text>
						<text x="32" y="45" fontSize="4">ELECTRICAL &amp; FABRICATION</text>
					</g>
					<path d="M60,10 l-7,9 h4 l-4,7 9,-10 h-4 Z" />
				</svg>
				<div className="pt-1.5">
					<h1 className="text-4xl leading-12 font-bold tracking-tight text-[#f8fafc]">LJCIndustries</h1>
					<p className="text-2xl leading-10 text-[#8b8e97]">Trade Management</p>
				</div>
			</div>

			<nav className="relative min-h-0 flex-1 overflow-hidden px-4 pt-4">
				<p className="flex h-16 items-center px-4 text-2xl font-medium text-[#a5a8af]">Main</p>
				<div className="flex flex-col gap-2">
					{navItems.map(({ label, icon: Icon }) => (
						<a key={label} href="#" className="flex h-16 items-center gap-4 px-4 text-[28px] text-[#f8fafc]">
							<Icon size={32} />
							{label}
						</a>
					))}
				</div>
				<div className="absolute top-0 right-0 h-[538px] w-2 bg-[#4a4e55]" />
			</nav>

			<div className="shrink-0 border-t-2 border-[#1f2937] px-4">
				<div className="flex h-[146px] items-center gap-6 px-6">
					<span className="flex size-16 items-center justify-center rounded-full bg-[#3b82f6] text-2xl text-white">L</span>
					<span className="text-[28px] font-medium text-[#f8fafc]">Liam Clark</span>
				</div>
				<p className="h-[62px] px-6 text-2xl text-[#737780]">v1.1.43</p>
				<div className="flex h-31 items-center justify-center border-t-2 border-[#1f2937]">
					<button aria-label="Toggle sidebar" className="text-white">
						<PanelLeft size={32} />
					</button>
				</div>
			</div>
		</aside>
	);
}

function Browser() {
	return (
		<header className="shrink-0 text-[#e3e1e9] font-['Roboto',sans-serif]">
			<div className="relative flex h-[76px] items-start justify-between bg-[#1f2129] px-4 text-white">
				<div className="flex h-12 items-center">
					<span className="w-[86px] text-[28px]">10:12</span>
					<svg width="20" height="24" viewBox="0 0 20 24">
						<rect x="0" y="1" width="20" height="22" rx="3" fill="currentColor" />
						<text x="10" y="16" fontSize="15" fontWeight="bold" textAnchor="middle" fill="#1f2129">A</text>
						<path d="M10,19 h2 v2 h-2 Z M13,19 h2 v2 h-2 Z M16,19 h2 v2 h-2 Z" fill="#1f2129" />
					</svg>
					<svg width="20" height="26" viewBox="0 0 20 26" className="ml-7">
						<path d="M7,0 H17 Q20,0 20,3 V23 Q20,26 17,26 H3 Q0,26 0,23 V8 Z" fill="currentColor" />
						<path d="M7,3 h2 v5 h-2 Z M11,3 h2 v5 h-2 Z M15,3 h2 v5 h-2 Z" fill="#1f2129" />
					</svg>
				</div>
				<div className="absolute top-8 left-1/2 h-2 w-40 -translate-x-1/2 rounded-full bg-[#ececec]" />
				<div className="flex h-12 items-center gap-3 pr-10">
					<svg width="30" height="25" viewBox="0 0 30 25" fill="currentColor">
						<path d="M15,25 L0,7 Q15,-7 30,7 Z" />
					</svg>
					<svg width="16" height="26" viewBox="0 0 16 26" fill="currentColor">
						<path d="M5,0 H11 V3 H14 Q16,3 16,5 V24 Q16,26 14,26 H2 Q0,26 0,24 V5 Q0,3 2,3 H5 Z" />
					</svg>
				</div>
			</div>

			<div className="flex h-[76px] items-center bg-[#1f2129] pl-1">
				<svg width="28" height="28" className="self-end" fill="#121317"><path d="M28,0 V28 H0 A28,28 0 0 0 28,0 Z" /></svg>
				<div className="flex h-full w-[466px] items-center gap-3 rounded-t-3xl bg-[#121317] pr-5 pb-2 pl-[22px]">
					<svg width="28" height="28" viewBox="0 0 28 28" fill="none" stroke="#3b6fe0" strokeWidth="1">
						<path d="M3,14 L8,9 V20 L13,22 M3,14 V26 M12,26 L14,20 16,11 20,9 M20,16 L25,11 V26 M2,26 H27" strokeDasharray="2 1" />
						<circle cx="21" cy="6" r="3" fill="#6fa2ff" />
						<path d="M15,20 L21,18 22,24 16,25 Z" fill="#6fa2ff" />
					</svg>
					<span className="min-w-0 flex-1 overflow-hidden text-[28px] whitespace-nowrap [mask-image:linear-gradient(to_right,#000_80%,transparent)]">
						MJC Job Manager - AI Powered
					</span>
					<button aria-label="Close tab" className="text-[#c6c5d0]">
						<svg width="20" height="20" viewBox="0 0 20 20" stroke="currentColor" strokeWidth="3"><path d="M1,1 L19,19 M19,1 L1,19" /></svg>
					</button>
				</div>
				<svg width="28" height="28" className="self-end" fill="#121317"><path d="M0,0 V28 H28 A28,28 0 0 1 0,0 Z" /></svg>
				<button aria-label="New tab" className="pb-2">
					<svg width="32" height="32" viewBox="0 0 32 32" stroke="currentColor" strokeWidth="3" strokeLinecap="round"><path d="M16,4 V28 M4,16 H28" /></svg>
				</button>
			</div>

			<div className="flex h-[114px] items-center border-b-2 border-[#46464f] bg-[#121317]">
				<button aria-label="Home" className="flex w-24 justify-center">
					<svg width="40" height="40" viewBox="0 0 40 40" fill="none" stroke="currentColor" strokeWidth="4"><path d="M3,20 L20,4 L37,20 M8,16 V36 H32 V16" /></svg>
				</button>
				<button aria-label="Back" className="flex w-24 justify-center">
					<svg width="40" height="40" viewBox="0 0 40 40" fill="none" stroke="currentColor" strokeWidth="4"><path d="M36,20 H7 M21,5 L6,20 L21,35" /></svg>
				</button>
				<button aria-label="Forward" className="flex w-24 justify-center text-[#66656b]">
					<svg width="40" height="40" viewBox="0 0 40 40" fill="none" stroke="currentColor" strokeWidth="4"><path d="M4,20 H33 M19,5 L34,20 L19,35" /></svg>
				</button>
				<button aria-label="Reload" className="flex w-24 justify-center">
					<svg width="40" height="40" viewBox="0 0 40 40" fill="none" stroke="currentColor" strokeWidth="4">
						<path d="M33.500,24 A14,14 0 1 1 30,10" />
						<path d="M36,4 V18 H22 Z" fill="currentColor" stroke="none" />
					</svg>
				</button>
				<div className="flex h-20 flex-1 items-center rounded-full bg-[#252632] pr-7 pl-8">
					<svg width="32" height="32" viewBox="0 0 32 32" fill="none" stroke="currentColor" strokeWidth="3" className="mr-8">
						<circle cx="7" cy="8" r="4.500" />
						<circle cx="25" cy="23" r="4.500" />
						<path d="M16,8 H30 M2,23 H16" />
					</svg>
					<input
						aria-label="Address"
						defaultValue="app.ljcindustries.com.au/app/map"
						className="min-w-0 flex-1 bg-linear-to-r from-[#e3e1e9] from-[350px] to-[#c5c4cf] to-[350px] bg-clip-text text-[32px] text-transparent outline-none"
					/>
					<button aria-label="Bookmark" className="mr-14">
						<svg width="40" height="40" viewBox="0 0 24 24" fill="currentColor">
							<path d="M22 9.240l-7.190-.620L12 2 9.190 8.630 2 9.240l5.460 4.730L5.820 21 12 17.270 18.180 21l-1.630-7.030L22 9.240zM12 15.400l-3.760 2.270 1-4.280-3.320-2.880 4.380-.380L12 6.100l1.710 4.040 4.380.380-3.320 2.880 1 4.280L12 15.400z" />
						</svg>
					</button>
					<button aria-label="Downloads">
						<svg width="40" height="40" viewBox="0 0 40 40" fill="currentColor"><path d="M14,4 H26 V15 H34 L20,29 L6,15 H14 Z M6,33 H34 V37 H6 Z" /></svg>
					</button>
				</div>
				<button aria-label="Tabs" className="flex w-24 justify-center">
					<span className="flex size-9 items-center justify-center rounded-[10px] border-4 border-[#e3e1e9] text-2xl leading-none font-medium">1</span>
				</button>
				<button aria-label="Update available" className="flex w-24 justify-center">
					<svg width="36" height="36" viewBox="0 0 36 36">
						<circle cx="18" cy="18" r="18" fill="#ffffff" />
						<path d="M18,9 L28,19 H23 V27 H13 V19 H8 Z" fill="#d93f2e" />
					</svg>
				</button>
			</div>
		</header>
	);
}

export default function App() {
	const [view, setView] = useState("History");

	return (
		<div className="h-screen overflow-hidden bg-black font-['Inter',sans-serif]">
			<div className="flex h-full flex-col overflow-hidden rounded-[32px] bg-[#121317]">
				<Browser />

				<div className="relative flex min-h-0 flex-1 overflow-hidden">
					<Sidebar />
					<main className="flex min-w-0 flex-1 flex-col bg-[#131c2e]">
						<div className="flex h-[110px] shrink-0 items-center justify-between border-b-2 border-[#1f2937] bg-[#101628] px-11 pb-0.5 text-white">
							<button aria-label="Toggle sidebar">
								<PanelLeft size={32} />
							</button>
							<button aria-label="Notifications" className="relative mr-3">
								<Bell size={32} />
								<span className="absolute -top-8 left-6 flex size-10 items-center justify-center rounded-full bg-[#7f1d1d] text-2xl font-semibold">9+</span>
							</button>
						</div>

						<div className="mx-12 flex min-h-0 flex-1 flex-col bg-[#101628]">
							<div className="flex h-[146px] shrink-0 items-center justify-between border-b-2 border-[#1f2937] px-8">
								<h2 className="text-5xl font-bold tracking-tight text-[#f8fafc]">Live Tracking</h2>
								<div className="flex rounded-3xl bg-[#202937] p-2 text-[28px] font-medium">
									{["Today", "History"].map((name) => (
										<button
											key={name}
											onClick={() => setView(name)}
											className={`h-16 rounded-2xl px-6 ${view === name ? "bg-[#101628] text-[#f8fafc]" : "text-[#8d9cb2]"}`}
										>
											{name}
										</button>
									))}
								</div>
							</div>
							<div className="flex min-h-0 flex-1">
								<MapPanel />
								<StatsPanel />
							</div>
						</div>
					</main>

					<button aria-label="Voice assistant" className="absolute right-12 bottom-6 flex h-28 w-32 items-center justify-center rounded-full bg-[#3b82f6] text-white shadow-xl">
						<Mic size={32} />
					</button>
				</div>

				<footer className="flex h-16 shrink-0 items-center justify-center border-t-2 border-[#46464f]">
					<div className="h-2 w-[440px] rounded-full bg-[#ececec]" />
				</footer>
			</div>
		</div>
	);
}
